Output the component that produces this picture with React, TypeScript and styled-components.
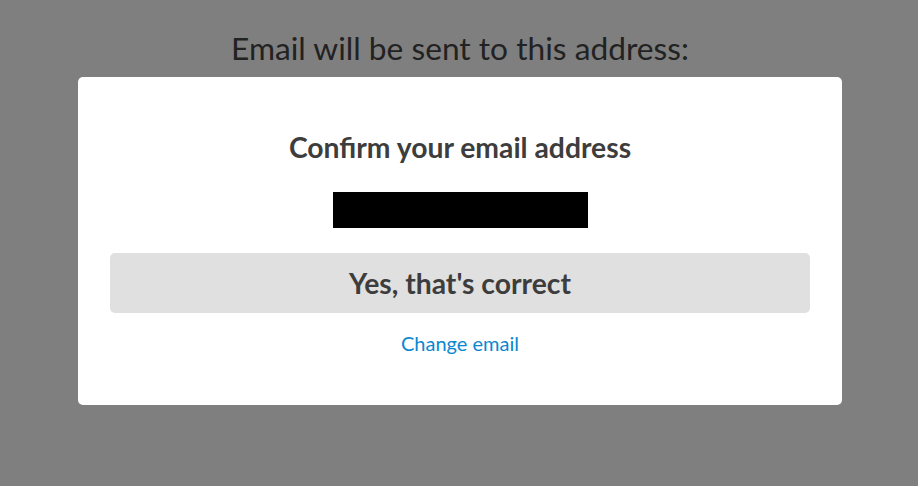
import styled, { createGlobalStyle } from "styled-components";

const GlobalStyle = createGlobalStyle`
  html, body {
    margin: 0;
    padding: 0;
    background: #7f7f7f;
    font-family: Lato, "Open Sans", sans-serif;
  }
`;

const Page = styled.div`
  width: 918px;
  height: 486px;
  display: flex;
  flex-direction: column;
  align-items: center;
  padding: 28px 0 0 2px;
  box-sizing: border-box;
`;

const Heading = styled.h1`
  margin: 0;
  font-size: 31.7px;
  font-weight: 400;
  line-height: 40px;
  color: #222222;
`;

const Modal = styled.div`
  margin-top: 9px;
  width: 764px;
  height: 328px;
  box-sizing: border-box;
  background: #ffffff;
  border-radius: 5px;
  display: flex;
  flex-direction: column;
  align-items: center;
  padding: 52px 32px 0;
`;

const Title = styled.h2`
  margin: 0;
  font-size: 28.3px;
  font-weight: 700;
  line-height: 36px;
  color: #3d3d3d;
`;

const Redacted = styled.div`
  margin-top: 27px;
  width: 255px;
  height: 36px;
  background: #000000;
`;

const ConfirmButton = styled.button`
  margin-top: 25px;
  width: 100%;
  height: 60px;
  border: none;
  border-radius: 5px;
  background: #e0e0e0;
  font-family: inherit;
  font-size: 28.3px;
  font-weight: 700;
  color: #3d3d3d;
  cursor: pointer;
`;

const ChangeLink = styled.a`
  margin-top: 18px;
  font-size: 20px;
  line-height: 24px;
  color: #0a88cf;
  text-decoration: none;
  cursor: pointer;
`;

export default function App() {
  return (
    <>
      <GlobalStyle />
      <Page>
        <Heading>Email will be sent to this address:</Heading>
        <Modal>
          <Title>Confirm your email address</Title>
          <Redacted />
          <ConfirmButton>Yes, that's correct</ConfirmButton>
          <ChangeLink>Change email</ChangeLink>
        </Modal>
      </Page>
    </>
  );
}
